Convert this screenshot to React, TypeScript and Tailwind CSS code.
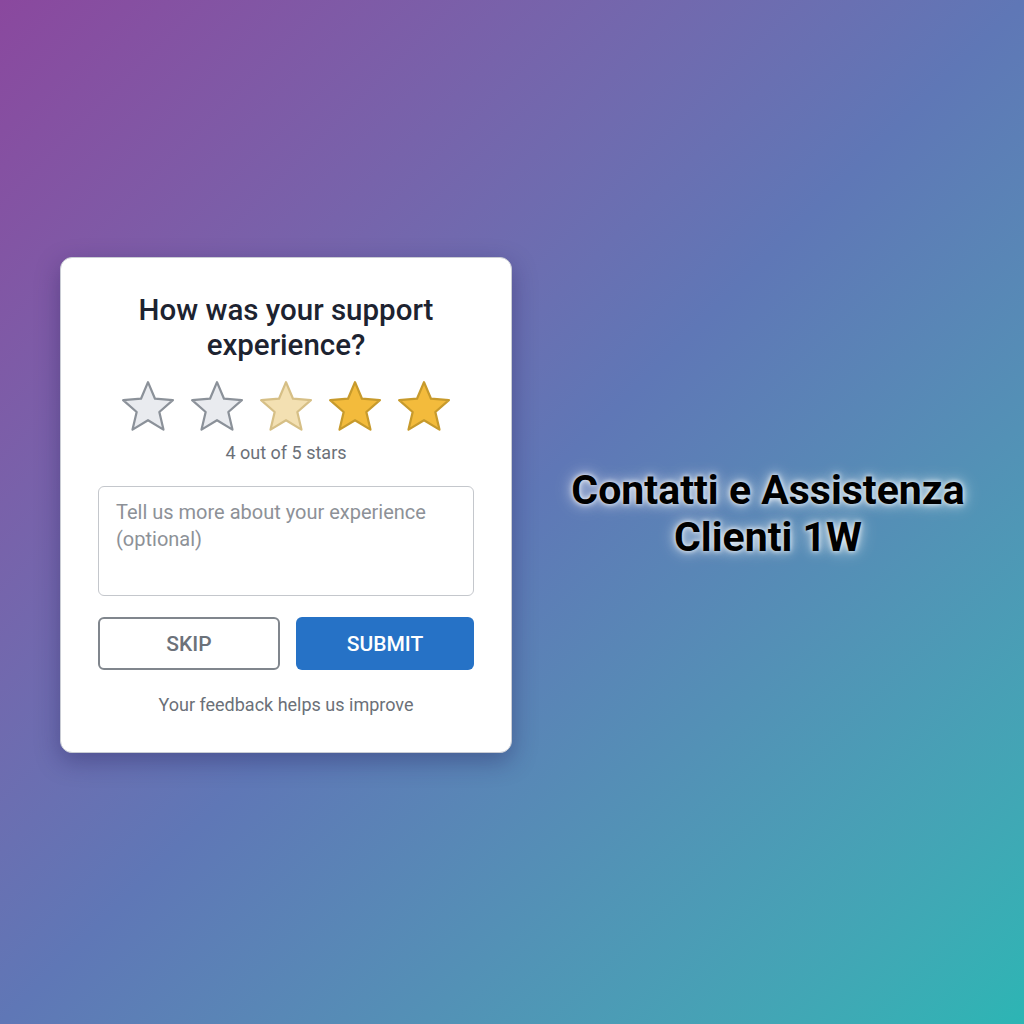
import React from 'react';

const Star = ({ fill, stroke }: { fill: string; stroke: string }) => (
  <svg width="54" height="52" viewBox="1.5 1 51 49">
    <path
      d="M27 3 L33.6 18.6 L50.5 20 L37.7 31.2 L41.6 47.8 L27 38.9 L12.4 47.8 L16.3 31.2 L3.5 20 L20.4 18.6 Z"
      fill={fill}
      stroke={stroke}
      strokeWidth="2.1"
      strokeLinejoin="round"
    />
  </svg>
);

const stars = [
  { fill: '#e9ebef', stroke: '#8b9199' },
  { fill: '#e9ebef', stroke: '#8b9199' },
  { fill: '#f3e0b2', stroke: '#d6bf86' },
  { fill: '#f3bb3c', stroke: '#c79a2c' },
  { fill: '#f3bb3c', stroke: '#c79a2c' },
];

const App = () => {
  return (
    <div
      className="w-[1024px] h-[1024px] flex items-center bg-gradient-to-br from-[#8a489e] via-[#5f77b6] to-[#2cb5b4]"
      style={{ fontFamily: 'Roboto, "Liberation Sans", sans-serif' }}
    >
      <div className="ml-[60px] -mt-[15px] w-[452px] h-[496px] bg-white rounded-[12px] border border-[#c9ccd4] shadow-[0_8px_24px_rgba(30,20,80,0.35)] px-[37px] pt-[35px] flex flex-col items-center">
        <h1 className="text-[29.5px] leading-[35px] text-[#1d2330] text-center font-medium">
          How was your support
          <br />
          experience?
        </h1>
        <div className="flex gap-[15px] mt-[17px]">
          {stars.map((s, i) => (
            <Star key={i} fill={s.fill} stroke={s.stroke} />
          ))}
        </div>
        <p className="text-[18px] leading-[22px] text-[#6b7078] mt-[10px]">4 out of 5 stars</p>
        <div className="w-full h-[110px] mt-[22px] border border-[#c4c7cc] rounded-[6px] px-[17px] pt-[12px] text-[20px] leading-[27px] text-[#8d9197]">
          Tell us more about your experience
          <br />
          (optional)
        </div>
        <div className="w-full flex gap-[16px] mt-[21px]">
          <button className="flex-1 h-[53px] rounded-[6px] border-2 border-[#80868d] text-[#6c727a] text-[21px] font-medium pt-[3px]">
            SKIP
          </button>
          <button className="flex-1 h-[53px] rounded-[6px] bg-[#2672c6] text-white text-[21px] font-medium pt-[3px]">
            SUBMIT
          </button>
        </div>
        <p className="text-[18px] leading-[22px] text-[#6b7078] mt-[24px]">Your feedback helps us improve</p>
      </div>
      <div className="flex-1 flex justify-center">
        <h2
          className="text-[41px] leading-[47px] font-bold text-black text-center mt-[4px]"
          style={{ textShadow: '0 0 5px rgba(255,255,255,0.95), 0 0 12px rgba(255,255,255,0.7), 0 0 20px rgba(255,255,255,0.4)' }}
        >
          Contatti e Assistenza
          <br />
          Clienti 1W
        </h2>
      </div>
    </div>
  );
};

export default App;
